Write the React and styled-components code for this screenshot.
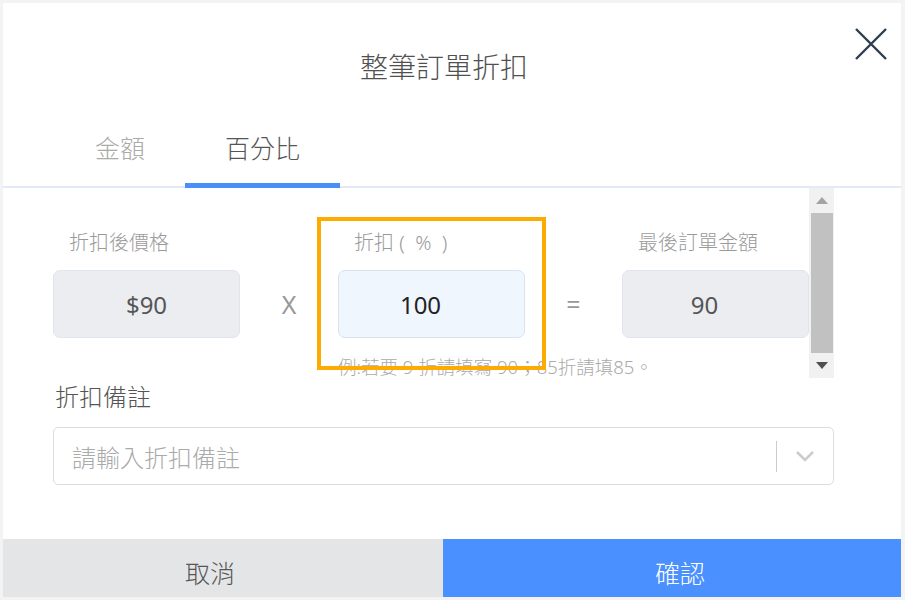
import React from "react";
import styled, { createGlobalStyle } from "styled-components";

const GlobalStyle = createGlobalStyle`
  html, body {
    margin: 0;
    padding: 0;
    background: #f3f3f3;
  }
  * {
    box-sizing: border-box;
  }
`;

const Modal = styled.div`
  position: relative;
  margin: 3px;
  width: 898px;
  height: 594px;
  background: #fff;
  display: flex;
  flex-direction: column;
  font-family: "Noto Sans", "Noto Sans CJK TC", sans-serif;
`;

const Title = styled.h1`
  margin: 44px 0 0;
  padding-right: 16px;
  font-size: 28px;
  line-height: 40px;
  font-weight: 300;
  color: #505050;
  text-align: center;
`;

const CloseButton = styled.button`
  position: absolute;
  top: 23px;
  right: 12px;
  width: 36px;
  height: 36px;
  padding: 0;
  border: none;
  background: none;
  cursor: pointer;
`;

const TabBar = styled.div`
  display: flex;
  margin-top: 44px;
  padding-left: 52px;
  border-bottom: 2px solid #e2eaf7;
`;

const Tab = styled.div`
  padding: 0 40px 18px;
  margin-bottom: -2px;
  font-size: 25px;
  line-height: 34px;
  font-weight: 300;
  color: ${(p) => (p.active ? "#555" : "#aaa")};
  border-bottom: 5px solid ${(p) => (p.active ? "#4a8ef9" : "transparent")};
`;

const ScrollArea = styled.div`
  display: flex;
  margin: 0 67px 0 50px;
`;

const ScrollContent = styled.div`
  flex: 1;
  display: grid;
  grid-template-columns: 187px 98px 187px 97px 187px;
  padding-top: 40px;
`;

const Field = styled.div`
  position: relative;
  display: flex;
  flex-direction: column;
`;

const FieldLabel = styled.div`
  padding-left: 16px;
  font-size: 20px;
  line-height: 30px;
  font-weight: 300;
  color: #9a9a9a;
  white-space: pre;
`;

const ValueBox = styled.div`
  margin-top: 12px;
  height: 68px;
  border-radius: 7px;
  border: 1px solid ${(p) => (p.editable ? "#d8e3f4" : "#dfe5ef")};
  background: ${(p) => (p.editable ? "#f0f6fe" : "#ebedf1")};
  display: flex;
  align-items: center;
  justify-content: center;
  padding-right: ${(p) => (p.shift ? "22px" : "0")};
  font-size: 24px;
  color: ${(p) => (p.editable ? "#222" : "#555")};
`;

const Operator = styled.div`
  align-self: start;
  margin-top: 42px;
  height: 68px;
  display: flex;
  align-items: center;
  justify-content: center;
  font-size: 25px;
  color: #999;
`;

const Hint = styled.div`
  margin-top: 18px;
  font-size: 18.5px;
  line-height: 22px;
  font-weight: 300;
  color: #aaa;
  white-space: nowrap;
`;

const Highlight = styled.div`
  position: absolute;
  top: -11px;
  left: -21px;
  right: -21px;
  bottom: 8px;
  border: 4px solid #fdab00;
  pointer-events: none;
`;

const Scrollbar = styled.div`
  width: 26px;
  background: #f1f1f1;
  display: flex;
  flex-direction: column;
  align-items: center;
`;

const Arrow = styled.div`
  height: 25px;
  display: flex;
  align-items: center;
  justify-content: center;
  &::before {
    content: "";
    border-left: 6px solid transparent;
    border-right: 6px solid transparent;
    ${(p) =>
      p.down
        ? "border-top: 7px solid #505050;"
        : "border-bottom: 7px solid #a3a3a3;"}
  }
`;

const Thumb = styled.div`
  width: 22px;
  flex: 1;
  background: #c1c1c1;
`;

const NoteLabel = styled.div`
  margin: 2px 0 0 52px;
  font-size: 24px;
  line-height: 34px;
  font-weight: 300;
  color: #555;
`;

const Select = styled.div`
  margin: 13px 67px 0 50px;
  height: 58px;
  border: 1px solid #dcdcdc;
  border-radius: 5px;
  display: flex;
  align-items: center;
`;

const Placeholder = styled.div`
  flex: 1;
  padding-left: 18px;
  font-size: 24px;
  font-weight: 300;
  color: #aaa;
`;

const Separator = styled.div`
  width: 1px;
  height: 31px;
  background: #ccc;
`;

const Chevron = styled.div`
  width: 56px;
  display: flex;
  align-items: center;
  justify-content: center;
`;

const Footer = styled.div`
  margin-top: auto;
  display: grid;
  grid-template-columns: 440px 1fr;
  height: 58px;
`;

const FooterButton = styled.button`
  border: none;
  font-family: inherit;
  font-size: 25px;
  font-weight: 300;
  cursor: pointer;
  padding: ${(p) => (p.primary ? "8px 0 0 16px" : "8px 26px 0 0")};
  background: ${(p) => (p.primary ? "#4a90fe" : "#e4e5e7")};
  color: ${(p) => (p.primary ? "#fff" : "#555")};
`;

export default function App() {
  return (
    <>
      <GlobalStyle />
      <Modal>
        <Title>整筆訂單折扣</Title>
        <CloseButton aria-label="close">
          <svg width="36" height="36" viewBox="0 0 36 36">
            <path
              d="M3 3 L33 33 M33 3 L3 33"
              stroke="#2c3e50"
              strokeWidth="2.4"
              fill="none"
            />
          </svg>
        </CloseButton>
        <TabBar>
          <Tab>金額</Tab>
          <Tab active>百分比</Tab>
        </TabBar>
        <ScrollArea>
          <ScrollContent>
            <Field>
              <FieldLabel>折扣後價格</FieldLabel>
              <ValueBox>$90</ValueBox>
            </Field>
            <Operator>X</Operator>
            <Field>
              <Highlight />
              <FieldLabel>{"折扣 (  %  )"}</FieldLabel>
              <ValueBox editable shift>
                100
              </ValueBox>
              <Hint>例:若要 9 折請填寫 90；85折請填85。</Hint>
            </Field>
            <Operator>=</Operator>
            <Field>
              <FieldLabel>最後訂單金額</FieldLabel>
              <ValueBox shift>90</ValueBox>
            </Field>
          </ScrollContent>
          <Scrollbar>
            <Arrow />
            <Thumb />
            <Arrow down />
          </Scrollbar>
        </ScrollArea>
        <NoteLabel>折扣備註</NoteLabel>
        <Select>
          <Placeholder>請輸入折扣備註</Placeholder>
          <Separator />
          <Chevron>
            <svg width="20" height="12" viewBox="0 0 20 12">
              <path
                d="M2 2 L10 10 L18 2"
                stroke="#cccccc"
                strokeWidth="2.6"
                fill="none"
              />
            </svg>
          </Chevron>
        </Select>
        <Footer>
          <FooterButton>取消</FooterButton>
          <FooterButton primary>確認</FooterButton>
        </Footer>
      </Modal>
    </>
  );
}
